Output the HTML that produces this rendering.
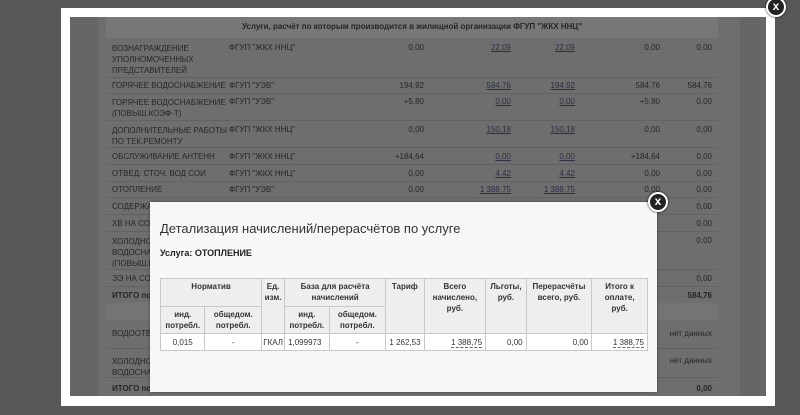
<!DOCTYPE html>
<html><head><meta charset="utf-8"><style>
*{margin:0;padding:0;box-sizing:border-box}
body{width:800px;height:415px;overflow:hidden;background:#575757;font-family:"Liberation Sans",sans-serif;position:relative}
.a{position:absolute;white-space:nowrap}
.t{font-size:8px;color:#262626}
.r{text-align:right}
.u{text-decoration:underline;color:#2a2f44}
.sep{position:absolute;left:106px;width:612px;height:1px;background:#626262}
.x{position:absolute;width:20px;height:20px;border-radius:50%;background:#222;border:2px solid #fff;color:#fff;font:bold 12px "Liberation Sans",sans-serif;text-align:center;line-height:15px;box-shadow:0 0 2px #000}
table{border-collapse:collapse;position:absolute;left:160px;top:278px;width:488px;font-size:8px;color:#333;background:#fff}
td,th{border:1px solid #c8c8c8;padding:2px 3px;text-align:center}
th{background:#eee;font-weight:bold;vertical-align:top;line-height:11px}
td{text-align:right;height:17px}
.dl{border-bottom:1px dashed #666}
</style></head><body>
<div class="a" style="left:61px;top:8px;width:714px;height:398px;background:#fff"></div>
<div class="a" style="left:70px;top:17px;width:696px;height:379px;background:#666"></div>
<div class="a" style="left:98px;top:17px;width:642px;height:379px;background:#6e6e6e"></div>
<div class="a" style="left:106px;top:17px;width:612px;height:21px;background:#777"></div>
<div class="a t" style="left:106px;width:612px;top:22px;text-align:center;font-weight:bold">Услуги, расчёт по которым производится в жилищной организации ФГУП "ЖКХ ННЦ"</div>
<div class="a" style="left:106px;top:303px;width:612px;height:17px;background:#747474"></div>

<div class="a t" style="left:112px;top:43px;line-height:11px">ВОЗНАГРАЖДЕНИЕ<br>УПОЛНОМОЧЕННЫХ<br>ПРЕДСТАВИТЕЛЕЙ</div>
<div class="sep" style="top:77px"></div>
<div class="a t" style="left:112px;top:81px">ГОРЯЧЕЕ ВОДОСНАБЖЕНИЕ</div>
<div class="sep" style="top:93px"></div>
<div class="a t" style="left:112px;top:97px;line-height:11px">ГОРЯЧЕЕ ВОДОСНАБЖЕНИЕ<br>(ПОВЫШ.КОЭФ-Т)</div>
<div class="sep" style="top:120px"></div>
<div class="a t" style="left:112px;top:125px;line-height:11px">ДОПОЛНИТЕЛЬНЫЕ РАБОТЫ<br>ПО ТЕК.РЕМОНТУ</div>
<div class="sep" style="top:147px"></div>
<div class="a t" style="left:112px;top:152px">ОБСЛУЖИВАНИЕ АНТЕНН</div>
<div class="sep" style="top:164px"></div>
<div class="a t" style="left:112px;top:169px">ОТВЕД. СТОЧ. ВОД СОИ</div>
<div class="sep" style="top:181px"></div>
<div class="a t" style="left:112px;top:185px">ОТОПЛЕНИЕ</div>
<div class="sep" style="top:197px"></div>
<div class="a t" style="left:112px;top:202px">СОДЕРЖА</div>
<div class="sep" style="top:214px"></div>
<div class="a t" style="left:112px;top:219px">ХВ НА СОД</div>
<div class="sep" style="top:231px"></div>
<div class="a t" style="left:112px;top:236px;line-height:11px">ХОЛОДНО<br>ВОДОСНА<br>(ПОВЫШ.К</div>
<div class="sep" style="top:269px"></div>
<div class="a t" style="left:112px;top:274px">ЭЭ НА СОД</div>
<div class="sep" style="top:286px"></div>
<div class="a t" style="left:112px;top:291px;font-weight:bold">ИТОГО по</div>
<div class="a t" style="left:112px;top:329px">ВОДООТВ</div>
<div class="sep" style="top:348px"></div>
<div class="a t" style="left:112px;top:356px;line-height:11px">ХОЛОДНО<br>ВОДОСНА</div>
<div class="sep" style="top:377px"></div>
<div class="a t" style="left:112px;top:384px;font-weight:bold">ИТОГО по</div>

<div class="a t" style="left:229px;top:43px">ФГУП "ЖКХ ННЦ"</div>
<div class="a t" style="left:229px;top:81px">ФГУП "УЭВ"</div>
<div class="a t" style="left:229px;top:97px">ФГУП "УЭВ"</div>
<div class="a t" style="left:229px;top:125px">ФГУП "ЖКХ ННЦ"</div>
<div class="a t" style="left:229px;top:152px">ФГУП "ЖКХ ННЦ"</div>
<div class="a t" style="left:229px;top:169px">ФГУП "ЖКХ ННЦ"</div>
<div class="a t" style="left:229px;top:185px">ФГУП "УЭВ"</div>

<div class="a t r" style="right:376px;top:43px">0,00</div>
<div class="a t r" style="right:376px;top:81px">194,92</div>
<div class="a t r" style="right:376px;top:97px">+5,80</div>
<div class="a t r" style="right:376px;top:125px">0,00</div>
<div class="a t r" style="right:376px;top:152px">+184,64</div>
<div class="a t r" style="right:376px;top:169px">0,00</div>
<div class="a t r" style="right:376px;top:185px">0,00</div>

<div class="a t r u" style="right:289px;top:43px">22,09</div>
<div class="a t r u" style="right:289px;top:81px">584,76</div>
<div class="a t r u" style="right:289px;top:97px">0,00</div>
<div class="a t r u" style="right:289px;top:125px">150,18</div>
<div class="a t r u" style="right:289px;top:152px">0,00</div>
<div class="a t r u" style="right:289px;top:169px">4,42</div>
<div class="a t r u" style="right:289px;top:185px">1 388,75</div>

<div class="a t r u" style="right:225px;top:43px">22,09</div>
<div class="a t r u" style="right:225px;top:81px">194,92</div>
<div class="a t r u" style="right:225px;top:97px">0,00</div>
<div class="a t r u" style="right:225px;top:125px">150,18</div>
<div class="a t r u" style="right:225px;top:152px">0,00</div>
<div class="a t r u" style="right:225px;top:169px">4,42</div>
<div class="a t r u" style="right:225px;top:185px">1 388,75</div>

<div class="a t r" style="right:140px;top:43px">0,00</div>
<div class="a t r" style="right:140px;top:81px">584,76</div>
<div class="a t r" style="right:140px;top:97px">+5,80</div>
<div class="a t r" style="right:140px;top:125px">0,00</div>
<div class="a t r" style="right:140px;top:152px">+184,64</div>
<div class="a t r" style="right:140px;top:169px">0,00</div>
<div class="a t r" style="right:140px;top:185px">0,00</div>

<div class="a t r" style="right:88px;top:43px">0,00</div>
<div class="a t r" style="right:88px;top:81px">584,76</div>
<div class="a t r" style="right:88px;top:97px">0,00</div>
<div class="a t r" style="right:88px;top:125px">0,00</div>
<div class="a t r" style="right:88px;top:152px">0,00</div>
<div class="a t r" style="right:88px;top:169px">0,00</div>
<div class="a t r" style="right:88px;top:185px">0,00</div>
<div class="a t r" style="right:88px;top:202px">0,00</div>
<div class="a t r" style="right:88px;top:219px">0,00</div>
<div class="a t r" style="right:88px;top:236px">0,00</div>
<div class="a t r" style="right:88px;top:274px">0,00</div>
<div class="a t r" style="right:88px;top:291px;font-weight:bold">584,76</div>
<div class="a t r" style="right:88px;top:329px">нет данных</div>
<div class="a t r" style="right:88px;top:356px">нет данных</div>
<div class="a t r" style="right:88px;top:384px;font-weight:bold">0,00</div>

<div class="x" style="left:766px;top:-3px">x</div>

<div class="a" style="left:150px;top:202px;width:507px;height:190px;background:#f7f7f7;box-shadow:0 0 3px rgba(0,0,0,.4)"></div>
<div class="a" style="left:160px;top:221px;font-size:13px;color:#333">Детализация начислений/перерасчётов по услуге</div>
<div class="a" style="left:160px;top:248px;font-size:9px;font-weight:bold;color:#222">Услуга: ОТОПЛЕНИЕ</div>
<table>
<tr><th colspan="2" style="height:28px">Норматив</th><th rowspan="2" style="width:18px;padding:2px 1px">Ед.<br>изм.</th><th colspan="2">База для расчёта<br>начислений</th><th rowspan="2" style="width:38px">Тариф</th><th rowspan="2" style="width:61px">Всего<br>начислено,<br>руб.</th><th rowspan="2" style="width:40px">Льготы,<br>руб.</th><th rowspan="2" style="width:65px">Перерасчёты<br>всего, руб.</th><th rowspan="2" style="width:55px">Итого к<br>оплате,<br>руб.</th></tr>
<tr><th style="width:44px">инд.<br>потребл.</th><th style="width:56px">общедом.<br>потребл.</th><th style="width:44px">инд.<br>потребл.</th><th style="width:56px">общедом.<br>потребл.</th></tr>
<tr><td style="text-align:center">0,015</td><td style="text-align:center">-</td><td style="padding:2px 1px">ГКАЛ</td><td style="text-align:left">1,099973</td><td style="text-align:center">-</td><td>1 262,53</td><td><span class="dl">1 388,75</span></td><td>0,00</td><td>0,00</td><td><span class="dl">1 388,75</span></td></tr>
</table>
<div class="x" style="left:648px;top:192px">x</div>
</body></html>
